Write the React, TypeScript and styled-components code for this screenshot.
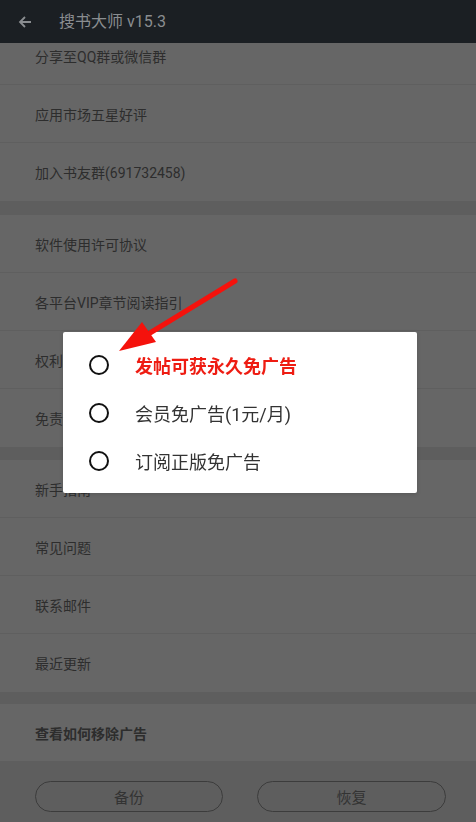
import React, { useEffect, useRef } from 'react';
import styled, { createGlobalStyle } from 'styled-components';

const GlobalStyle = createGlobalStyle`
  html, body {
    margin: 0;
    padding: 0;
    height: 100%;
    background: #666666;
    font-family: Roboto, "Noto Sans CJK SC", sans-serif;
  }
  #root {
    height: 100%;
  }
`;

const Screen = styled.div`
  position: relative;
  display: flex;
  flex-direction: column;
  width: 476px;
  height: 822px;
  overflow: hidden;
  background: #666666;
`;

const Toolbar = styled.div`
  display: flex;
  align-items: center;
  flex: none;
  height: 43px;
  padding-left: 18px;
  background: #1b1f23;
  color: #8a8d90;
`;

const BackButton = styled.div`
  display: flex;
  align-items: center;
  width: 41px;
  height: 43px;
`;

const Title = styled.h1`
  margin: 0;
  font-size: 16px;
  font-weight: 400;
  line-height: 20px;
  color: #8a8d90;
`;

const Scroller = styled.div`
  flex: 1;
  overflow-y: auto;
  scrollbar-width: none;
  &::-webkit-scrollbar {
    display: none;
  }
`;

const Group = styled.div<{ $gap: number }>`
  padding-bottom: ${(p) => p.$gap}px;
  background: #5e5e5e;
`;

const Section = styled.div`
  background: #666666;
`;

const Row = styled.div<{ $bold?: boolean; $height?: number }>`
  display: flex;
  align-items: center;
  height: ${(p) => p.$height ?? 58}px;
  padding-left: 35px;
  box-sizing: border-box;
  font-size: 14px;
  font-weight: ${(p) => (p.$bold ? 700 : 400)};
  color: #2d2d2d;
  border-bottom: 1px solid #5f5f5f;
  &:last-child {
    border-bottom: none;
  }
`;

const Footer = styled.div`
  flex: none;
  display: grid;
  grid-template-columns: 188px 189px;
  column-gap: 34px;
  height: 61px;
  padding: 20px 0 0 35px;
  box-sizing: border-box;
  background: #5e5e5e;
`;

const PillButton = styled.button`
  height: 31px;
  border: 1px solid #3c3c3c;
  border-radius: 16px;
  background: transparent;
  font-family: inherit;
  font-size: 15px;
  color: #333333;
  padding: 0;
`;

const Overlay = styled.div`
  position: absolute;
  inset: 0;
  display: flex;
  align-items: center;
  justify-content: center;
  padding-top: 3px;
`;

const Dialog = styled.div`
  width: 354px;
  margin-left: 4px;
  padding: 9px 0 8px;
  background: #ffffff;
  border-radius: 2px;
  box-shadow: 0 1px 4px rgba(0, 0, 0, 0.15);
`;

const Option = styled.label<{ $highlight?: boolean }>`
  display: flex;
  align-items: center;
  height: 48px;
  padding-left: 26px;
  font-size: 18px;
  font-weight: ${(p) => (p.$highlight ? 700 : 400)};
  color: ${(p) => (p.$highlight ? '#ee1c12' : '#333333')};
`;

const Radio = styled.span`
  flex: none;
  width: 16px;
  height: 16px;
  margin-right: 26px;
  border: 2px solid #111111;
  border-radius: 50%;
`;

const Annotation = styled.svg`
  position: absolute;
  left: 0;
  top: 0;
  pointer-events: none;
`;

const groups = [
  { gap: 14, items: ['分享至QQ群或微信群', '应用市场五星好评', '加入书友群(691732458)'] },
  { gap: 13, items: ['软件使用许可协议', '各平台VIP章节阅读指引', '权利声明', '免责声明'] },
  { gap: 12, items: ['新手指南', '常见问题', '联系邮件', '最近更新'] },
];

const options = ['发帖可获永久免广告', '会员免广告(1元/月)', '订阅正版免广告'];

export default function App() {
  const scrollRef = useRef<HTMLDivElement>(null);

  useEffect(() => {
    if (scrollRef.current) scrollRef.current.scrollTop = 10000;
  }, []);

  return (
    <>
      <GlobalStyle />
      <Screen>
        <Toolbar>
          <BackButton>
            <svg width="14" height="14" viewBox="0 0 14 14" fill="none">
              <path d="M13 7H2M7 2L2 7l5 5" stroke="#8a8d90" strokeWidth="1.8" />
            </svg>
          </BackButton>
          <Title>搜书大师 v15.3</Title>
        </Toolbar>

        <Scroller ref={scrollRef}>
          {groups.map((g) => (
            <Group key={g.items[0]} $gap={g.gap}>
              <Section>
                {g.items.map((t) => (
                  <Row key={t}>{t}</Row>
                ))}
              </Section>
            </Group>
          ))}
          <Section>
            <Row $bold $height={57}>查看如何移除广告</Row>
          </Section>
        </Scroller>

        <Footer>
          <PillButton>备份</PillButton>
          <PillButton>恢复</PillButton>
        </Footer>

        <Overlay>
          <Dialog>
            {options.map((o, i) => (
              <Option key={o} $highlight={i === 0}>
                <Radio />
                {o}
              </Option>
            ))}
          </Dialog>
        </Overlay>

        <Annotation width="476" height="822" viewBox="0 0 476 822">
          <line x1="235" y1="281" x2="145" y2="336" stroke="#f5120c" strokeWidth="5" strokeLinecap="round" />
          <polygon points="119,351 142,322 156,342" fill="#f5120c" />
        </Annotation>
      </Screen>
    </>
  );
}
